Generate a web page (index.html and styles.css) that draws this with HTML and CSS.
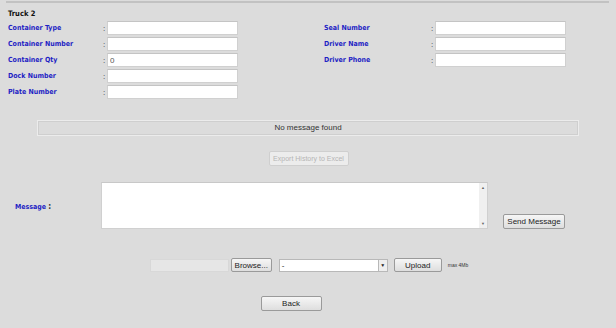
FILE: index.html
```html
<!DOCTYPE html>
<html lang="en">
<head>
    <meta charset="UTF-8">
    <meta name="viewport" content="width=device-width, initial-scale=1.0">
    <title>Truck Details</title>
    <link rel="stylesheet" href="styles.css">
</head>
<body>
    <div class="top-line"></div>
    <div class="truck">
        <h4 class="truck-title">Truck 2</h4>
        <div class="fields">
            <div class="field-col left">
                <div class="field"><label>Container Type</label><span class="colon">:</span><input type="text"></div>
                <div class="field"><label>Container Number</label><span class="colon">:</span><input type="text"></div>
                <div class="field"><label>Container Qty</label><span class="colon">:</span><input type="text" value="0"></div>
                <div class="field"><label>Dock Number</label><span class="colon">:</span><input type="text"></div>
                <div class="field"><label>Plate Number</label><span class="colon">:</span><input type="text"></div>
            </div>
            <div class="field-col right">
                <div class="field"><label>Seal Number</label><span class="colon">:</span><input type="text"></div>
                <div class="field"><label>Driver Name</label><span class="colon">:</span><input type="text"></div>
                <div class="field"><label>Driver Phone</label><span class="colon">:</span><input type="text"></div>
            </div>
        </div>
    </div>

    <div class="history">No message found</div>

    <div class="center-row export-row">
        <button class="btn" disabled>Export History to Excel</button>
    </div>

    <div class="message-row">
        <label class="message-label">Message <span class="colon">:</span></label>
        <div class="textarea">
            <div class="scroll">
                <span class="arrow">&#9650;</span>
                <span class="arrow">&#9660;</span>
            </div>
        </div>
        <button class="btn send-btn">Send Message</button>
    </div>

    <div class="center-row upload-row">
        <span class="file-path"></span>
        <button class="btn browse-btn">Browse...</button>
        <div class="select">
            <span class="select-value">-</span>
            <span class="select-arrow">&#9660;</span>
        </div>
        <button class="btn upload-btn">Upload</button>
        <span class="max-size">max 4Mb</span>
    </div>

    <div class="center-row back-row">
        <button class="btn back-btn">Back</button>
    </div>
</body>
</html>
```

FILE: styles.css
```css
body {
    margin: 0;
    background-color: #dcdcdc;
    font-family: "Liberation Sans", Arial, sans-serif;
    font-size: 8px;
    color: #222;
}
.top-line {
    margin: 1px 7px 0 6px;
    border-top: 2px solid #c2c2c2;
}
.truck {
    padding: 0 8px;
}
.truck-title {
    margin: 0;
    padding-top: 6px;
    height: 12px;
    font-family: "DejaVu Sans Condensed", "DejaVu Sans", sans-serif;
    font-size: 7.5px;
    font-weight: bold;
    color: #111;
}
.fields {
    display: flex;
    gap: 86px;
    margin-top: -1px;
}
.field {
    display: grid;
    align-items: center;
    height: 16px;
}
.left .field {
    grid-template-columns: 95px 4px 131px;
}
.right .field {
    grid-template-columns: 107px 4px 132px;
}
.field label, .message-label {
    font-family: "DejaVu Sans Condensed", "DejaVu Sans", sans-serif;
    font-size: 7px;
    font-weight: bold;
    color: #1f1fc4;
    white-space: nowrap;
}
.colon {
    font-size: 8px;
    color: #333;
}
.field input {
    box-sizing: border-box;
    height: 14px;
    width: 131px;
    margin: 0;
    padding: 0 2px;
    border: 1px solid #d0d0d0;
    border-top-color: #c4c4c4;
    background: #fff;
    font-family: "Liberation Sans", Arial, sans-serif;
    font-size: 8px;
    color: #555;
}
.history {
    box-sizing: border-box;
    margin: 20px 37px 0;
    height: 16px;
    border: 1px solid #ececec;
    outline: 1px solid #cfcfcf;
    outline-offset: -2px;
    text-align: center;
    line-height: 14px;
    font-size: 8px;
    color: #333;
}
.center-row {
    display: flex;
    justify-content: center;
    align-items: center;
}
.btn {
    box-sizing: border-box;
    height: 15px;
    margin: 0;
    padding: 0;
    border: 1px solid #9a9a9a;
    border-radius: 2px;
    background: linear-gradient(#f6f6f6, #dedede);
    font-family: "Liberation Sans", Arial, sans-serif;
    font-size: 8px;
    line-height: 13px;
    color: #222;
    white-space: nowrap;
}
.export-row {
    margin-top: 15px;
    padding-left: 1px;
}
.btn[disabled] {
    width: 80px;
    font-size: 7px;
    background: #ececec;
    border-color: #cfcfcf;
    color: #b5b5b5;
}
.message-row {
    display: flex;
    align-items: flex-end;
    margin-top: 16px;
    padding-left: 15px;
}
.message-label {
    width: 86px;
    align-self: center;
    padding-top: 2px;
}
.message-label .colon {
    font-weight: bold;
}
.textarea {
    box-sizing: border-box;
    width: 387px;
    height: 47px;
    background: #fff;
    border: 1px solid #d0d0d0;
    border-top-color: #c8c8c8;
    display: flex;
    justify-content: flex-end;
}
.scroll {
    width: 8px;
    background: #f0f0f0;
    display: flex;
    flex-direction: column;
    justify-content: space-between;
    align-items: center;
    padding: 2px 0;
}
.arrow {
    font-size: 4px;
    color: #666;
}
.send-btn {
    width: 62px;
    margin-left: 15px;
    margin-bottom: 0;
}
.upload-row {
    margin-top: 29px;
    padding-left: 2px;
}
.file-path {
    box-sizing: border-box;
    width: 79px;
    height: 13px;
    background: #e6e6e6;
    border: 1px solid #d8d8d8;
}
.browse-btn {
    width: 41px;
    height: 14px;
    margin-left: 2px;
}
.select {
    box-sizing: border-box;
    width: 109px;
    height: 13px;
    margin-left: 7px;
    background: #fff;
    border: 1px solid #b8b8b8;
    display: flex;
    justify-content: space-between;
    align-items: center;
}
.select-value {
    padding-left: 2px;
    font-size: 8px;
}
.select-arrow {
    box-sizing: border-box;
    width: 9px;
    height: 11px;
    border-left: 1px solid #b8b8b8;
    background: #eee;
    font-size: 5px;
    line-height: 11px;
    text-align: center;
    color: #222;
}
.upload-btn {
    width: 48px;
    height: 14px;
    margin-left: 6px;
}
.max-size {
    margin-left: 6px;
    font-size: 5px;
    color: #333;
}
.back-row {
    margin-top: 24px;
    padding-right: 34px;
}
.back-btn {
    width: 61px;
    height: 15px;
}
```
